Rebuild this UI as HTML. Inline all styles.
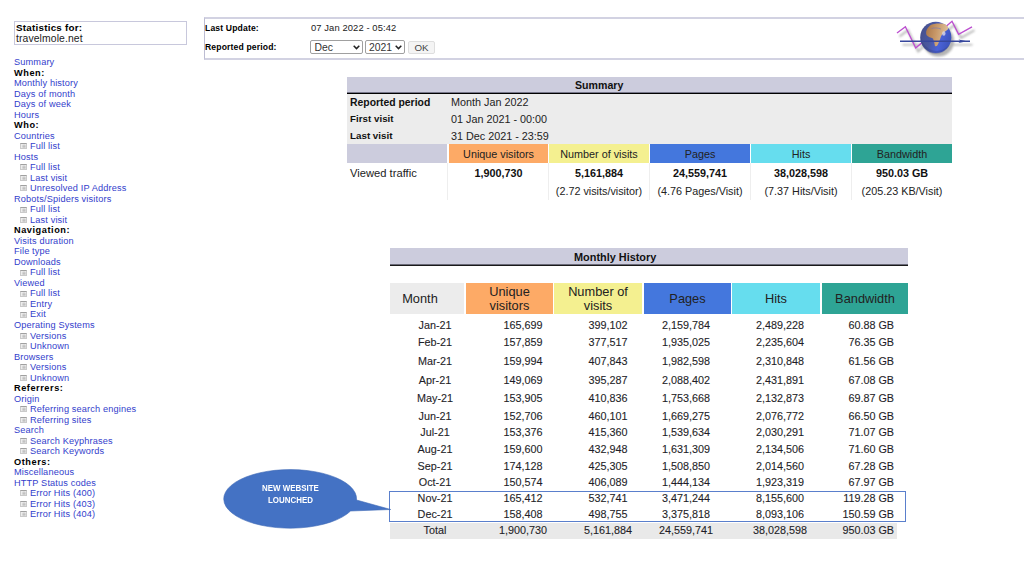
<!DOCTYPE html>
<html><head><meta charset="utf-8">
<style>
html,body{margin:0;padding:0;background:#fff;width:1024px;height:581px;overflow:hidden;position:relative;font-family:"Liberation Sans",sans-serif;color:#000}
.a{position:absolute;white-space:nowrap}
#stats{left:14px;top:21px;width:171px;height:22px;border:1px solid #c8c8dc}
#info{left:204px;top:17px;width:900px;height:39px;border:2px solid #d2d2e2;border-left:1px solid #bcbcd2}
#menu{left:14px;top:57.1px;font-size:9.2px;letter-spacing:0.15px;line-height:10.523px;color:#3340cc}
#menu div{height:10.523px}
#menu b{color:#000;letter-spacing:0.55px}
#menu .s{padding-left:16px;position:relative}
#menu .s:before{content:"";position:absolute;left:6px;top:2.2px;width:5px;height:4px;background:radial-gradient(circle at 60% 60%,#b8b8b8 0,#d4d4d4 1.5px,#ececec 2.5px);border:1px solid #cacaca;border-top-color:#a0a0a0}
.t{font-size:10.8px;color:#222}

.sel{border:1px solid #a0a0a0;border-radius:2px;background:#fff}
.sel span{position:absolute;top:1px;font-size:10.4px;color:#333;line-height:12px}
.sel i{position:absolute;right:5px;top:2.3px;width:3.2px;height:3.2px;border-right:1.5px solid #222;border-bottom:1.5px solid #222;transform:rotate(45deg)}
.btn{border:1px solid #dedede;border-radius:2px;background:#f4f4f4;font-size:9.8px;color:#444;text-align:center;line-height:12px}
.vl{top:163px;width:1px;height:37px;background:#eeeeee}
.t{font-size:10.8px;color:#222}
.tb{font-weight:bold;color:#111}
.tc{font-size:10.8px;color:#222;text-align:center}
.b{font-weight:bold;color:#111}
.mh{top:283px;height:31px;display:flex;align-items:center;justify-content:center;text-align:center;font-size:12.8px;line-height:14px;color:#222}
.cw{color:#fff;font-weight:bold;font-size:9px;transform:scaleX(0.88);transform-origin:0 0}
.r{position:absolute;font-size:10.8px;color:#1e1e28;white-space:nowrap;-webkit-text-stroke:0.1px #1e1e28}
</style></head><body>

<div class="a" id="stats"></div>
<div class="a" style="left:16px;top:22px;font-size:9.8px;font-weight:bold;letter-spacing:0.25px;color:#000">Statistics for:</div>
<div class="a" style="left:16px;top:33px;font-size:10.4px;letter-spacing:0.1px;color:#222">travelmole.net</div>

<div class="a" id="info"></div>
<div class="a" style="left:205px;top:23px;font-size:8.6px;font-weight:bold;letter-spacing:0.15px">Last Update:</div>
<div class="a" style="left:311px;top:22px;font-size:9.4px;letter-spacing:0.1px;color:#222">07 Jan 2022 - 05:42</div>
<div class="a" style="left:205px;top:42px;font-size:8.6px;font-weight:bold;letter-spacing:0.15px">Reported period:</div>

<div class="a" id="menu">
<div>Summary</div>
<div><b>When:</b></div>
<div>Monthly history</div>
<div>Days of month</div>
<div>Days of week</div>
<div>Hours</div>
<div><b>Who:</b></div>
<div>Countries</div>
<div class="s">Full list</div>
<div>Hosts</div>
<div class="s">Full list</div>
<div class="s">Last visit</div>
<div class="s">Unresolved IP Address</div>
<div>Robots/Spiders visitors</div>
<div class="s">Full list</div>
<div class="s">Last visit</div>
<div><b>Navigation:</b></div>
<div>Visits duration</div>
<div>File type</div>
<div>Downloads</div>
<div class="s">Full list</div>
<div>Viewed</div>
<div class="s">Full list</div>
<div class="s">Entry</div>
<div class="s">Exit</div>
<div>Operating Systems</div>
<div class="s">Versions</div>
<div class="s">Unknown</div>
<div>Browsers</div>
<div class="s">Versions</div>
<div class="s">Unknown</div>
<div><b>Referrers:</b></div>
<div>Origin</div>
<div class="s">Referring search engines</div>
<div class="s">Referring sites</div>
<div>Search</div>
<div class="s">Search Keyphrases</div>
<div class="s">Search Keywords</div>
<div><b>Others:</b></div>
<div>Miscellaneous</div>
<div>HTTP Status codes</div>
<div class="s">Error Hits (400)</div>
<div class="s">Error Hits (403)</div>
<div class="s">Error Hits (404)</div>
</div>


<!-- selects -->
<div class="a sel" style="left:310px;top:40px;width:51px;height:12px"><span style="left:3.5px">Dec</span><svg style="position:absolute;left:42px;top:4.3px" width="7" height="5" viewBox="0 0 7 5"><polyline points="0.7,0.8 3.5,3.6 6.3,0.8" fill="none" stroke="#222" stroke-width="1.5"/></svg></div>
<div class="a sel" style="left:365px;top:40px;width:38px;height:12px"><span style="left:3px">2021</span><svg style="position:absolute;left:29px;top:4.3px" width="7" height="5" viewBox="0 0 7 5"><polyline points="0.7,0.8 3.5,3.6 6.3,0.8" fill="none" stroke="#222" stroke-width="1.5"/></svg></div>
<div class="a btn" style="left:408px;top:41px;width:25px;height:11px">OK</div>

<!-- globe -->
<svg class="a" style="left:890px;top:14px" width="90" height="46" viewBox="890 14 90 46">
<defs>
<linearGradient id="gg" x1="0" y1="0" x2="1" y2="0.3">
<stop offset="0" stop-color="#464e88"/><stop offset="0.45" stop-color="#4a58a0"/><stop offset="0.75" stop-color="#4a62d8"/><stop offset="1" stop-color="#3f56c0"/>
</linearGradient>
<linearGradient id="land" x1="0" y1="0" x2="1" y2="0.2"><stop offset="0" stop-color="#a87448"/><stop offset="0.5" stop-color="#c89868"/><stop offset="1" stop-color="#dcc09a"/></linearGradient>
<filter id="bl" x="-30%" y="-30%" width="160%" height="160%"><feGaussianBlur stdDeviation="1.1"/></filter>
</defs>
<g opacity="0.4" filter="url(#bl)" transform="translate(2.5,3.5)">
<polyline points="897,33 905.4,26.7 915.7,48 921,43" fill="none" stroke="#444" stroke-width="1.8"/>
<polyline points="946,26.5 952,21.3 958.6,34.4 972,26.8" fill="none" stroke="#444" stroke-width="1.8"/>
<line x1="900" y1="41.2" x2="970" y2="41.2" stroke="#444" stroke-width="1.6"/>
<circle cx="936" cy="37.5" r="15.6" fill="#444"/>
</g>
<polyline points="897,33 905.4,26.7 915.7,48 922,42.6" fill="none" stroke="#bc4fd0" stroke-width="1.4" stroke-linejoin="miter"/>
<polyline points="946,26.5 952,21.3 958.6,34.4 972,26.8" fill="none" stroke="#bc4fd0" stroke-width="1.4"/>
<circle cx="935.8" cy="37.4" r="15.6" fill="url(#gg)"/>
<path d="M930,25.5 C933,23.5 940,23 944.5,24 C947,25 948.5,27 948.3,29 L946.5,30.5 C944,32 942,34 941,36.5 C940,39.5 938.8,43 937,46 L935,46.2 C934.5,43.5 934,41 933,38.5 C931,37.5 928,37 926.5,35 C925.6,32.5 926.3,30 927.8,28 Z" fill="url(#land)"/>
<path d="M931.5,28.5 C934,27.6 938,27.8 941,29" fill="none" stroke="#6a70c0" stroke-width="0.9" opacity="0.6"/>

<ellipse cx="943.8" cy="33.5" rx="1.7" ry="2.3" fill="#dcdae6" opacity="0.8"/>
<path d="M921,37 A15,15 0 0 0 950,44 A16,16 0 0 1 921,37 Z" fill="#2c3570" opacity="0.25"/>
<line x1="900" y1="41.2" x2="970" y2="41.2" stroke="#36469c" stroke-width="1.4"/>
<path d="M958.5,39.4 L967,41.2 L958.5,43 L960.5,41.2 Z" fill="#36469c"/>
</svg>

<!-- Summary table -->
<div class="a" style="left:347px;top:77px;width:605px;height:15px;background:#ccccdd"></div>
<div class="a" style="left:347px;top:92px;width:605px;height:1px;background:#77778a"></div><div class="a" style="left:347px;top:93px;width:605px;height:1px;background:#000"></div>
<div class="a" style="left:347px;top:94px;width:605px;height:50px;background:#ececec"></div>
<div class="a" style="left:347px;top:144px;width:100px;height:19px;background:#ccccdd"></div>
<div class="a" style="left:449px;top:144px;width:99px;height:19px;background:#fdaa66"></div>
<div class="a" style="left:549px;top:144px;width:100px;height:19px;background:#f4f090"></div>
<div class="a" style="left:650px;top:144px;width:100px;height:19px;background:#4477dd"></div>
<div class="a" style="left:751px;top:144px;width:100px;height:19px;background:#66ddee"></div>
<div class="a" style="left:852px;top:144px;width:100px;height:19px;background:#2ea495"></div>
<div class="a vl" style="left:447px"></div>
<div class="a vl" style="left:548px"></div>
<div class="a vl" style="left:649px"></div>
<div class="a vl" style="left:750px"></div>
<div class="a vl" style="left:851px"></div>

<div class="a tb" style="left:575px;top:79px;font-size:10.6px">Summary</div>
<div class="a tb" style="left:350px;top:97px;font-size:10.4px">Reported period</div>
<div class="a tb" style="left:350px;top:113px;font-size:9.7px;letter-spacing:0.05px">First visit</div>
<div class="a tb" style="left:350px;top:130px;font-size:9.8px">Last visit</div>
<div class="a t" style="left:451px;top:96px">Month Jan 2022</div>
<div class="a t" style="left:451px;top:113px">01 Jan 2021 - 00:00</div>
<div class="a t" style="left:451px;top:130px">31 Dec 2021 - 23:59</div>

<div class="a tc" style="left:449px;width:99px;top:148px">Unique visitors</div>
<div class="a tc" style="left:549px;width:100px;top:148px">Number of visits</div>
<div class="a tc" style="left:650px;width:100px;top:148px">Pages</div>
<div class="a tc" style="left:751px;width:100px;top:148px">Hits</div>
<div class="a tc" style="left:852px;width:100px;top:148px">Bandwidth</div>

<div class="a t" style="left:350px;top:167px;font-size:11.2px">Viewed traffic</div>
<div class="a tc b" style="left:449px;width:99px;top:167px">1,900,730</div>
<div class="a tc b" style="left:549px;width:100px;top:167px">5,161,884</div>
<div class="a tc b" style="left:650px;width:100px;top:167px">24,559,741</div>
<div class="a tc b" style="left:751px;width:100px;top:167px">38,028,598</div>
<div class="a tc b" style="left:852px;width:100px;top:167px">950.03 GB</div>
<div class="a tc" style="left:549px;width:100px;top:185px">(2.72 visits/visitor)</div>
<div class="a tc" style="left:650px;width:100px;top:185px">(4.76 Pages/Visit)</div>
<div class="a tc" style="left:751px;width:100px;top:185px">(7.37 Hits/Visit)</div>
<div class="a tc" style="left:852px;width:100px;top:185px">(205.23 KB/Visit)</div>

<!-- Monthly history -->
<div class="a" style="left:390px;top:248px;width:518px;height:16px;background:#ccccdd"></div>
<div class="a" style="left:390px;top:264px;width:518px;height:1px;background:#6a6a78"></div><div class="a" style="left:390px;top:265px;width:518px;height:1px;background:#1a1a1a"></div>
<div class="a tb" style="left:574px;top:251px;font-size:10.9px">Monthly History</div>

<div class="a mh" style="left:390px;width:74px;background:#ececec"><div style="padding-right:14px">Month</div></div>
<div class="a mh" style="left:466px;width:87px;background:#fdaa66"><div>Unique<br>visitors</div></div>
<div class="a mh" style="left:554px;width:88px;background:#f4f090"><div>Number of<br>visits</div></div>
<div class="a mh" style="left:644px;width:87px;background:#4477dd"><div>Pages</div></div>
<div class="a mh" style="left:732px;width:88px;background:#66ddee"><div>Hits</div></div>
<div class="a mh" style="left:822px;width:86px;background:#2ea495"><div>Bandwidth</div></div>

<div class="a" style="left:390px;top:523px;width:507px;height:16px;background:#e9e9e9"></div>
<div class="a" style="left:389px;top:491px;width:515px;height:29px;border:1px solid #5a7fcc"></div>

<div id="rows">
<div class="r" style="left:385px;width:100px;text-align:center;top:319px">Jan-21</div>
<div class="r" style="left:473px;width:100px;text-align:center;top:319px">165,699</div>
<div class="r" style="left:558px;width:100px;text-align:center;top:319px">399,102</div>
<div class="r" style="left:636px;width:100px;text-align:center;top:319px">2,159,784</div>
<div class="r" style="left:730px;width:100px;text-align:center;top:319px">2,489,228</div>
<div class="r" style="left:794px;width:100px;text-align:right;top:319px">60.88 GB</div>
<div class="r" style="left:385px;width:100px;text-align:center;top:336px">Feb-21</div>
<div class="r" style="left:473px;width:100px;text-align:center;top:336px">157,859</div>
<div class="r" style="left:558px;width:100px;text-align:center;top:336px">377,517</div>
<div class="r" style="left:636px;width:100px;text-align:center;top:336px">1,935,025</div>
<div class="r" style="left:730px;width:100px;text-align:center;top:336px">2,235,604</div>
<div class="r" style="left:794px;width:100px;text-align:right;top:336px">76.35 GB</div>
<div class="r" style="left:385px;width:100px;text-align:center;top:355px">Mar-21</div>
<div class="r" style="left:473px;width:100px;text-align:center;top:355px">159,994</div>
<div class="r" style="left:558px;width:100px;text-align:center;top:355px">407,843</div>
<div class="r" style="left:636px;width:100px;text-align:center;top:355px">1,982,598</div>
<div class="r" style="left:730px;width:100px;text-align:center;top:355px">2,310,848</div>
<div class="r" style="left:794px;width:100px;text-align:right;top:355px">61.56 GB</div>
<div class="r" style="left:385px;width:100px;text-align:center;top:374px">Apr-21</div>
<div class="r" style="left:473px;width:100px;text-align:center;top:374px">149,069</div>
<div class="r" style="left:558px;width:100px;text-align:center;top:374px">395,287</div>
<div class="r" style="left:636px;width:100px;text-align:center;top:374px">2,088,402</div>
<div class="r" style="left:730px;width:100px;text-align:center;top:374px">2,431,891</div>
<div class="r" style="left:794px;width:100px;text-align:right;top:374px">67.08 GB</div>
<div class="r" style="left:385px;width:100px;text-align:center;top:392px">May-21</div>
<div class="r" style="left:473px;width:100px;text-align:center;top:392px">153,905</div>
<div class="r" style="left:558px;width:100px;text-align:center;top:392px">410,836</div>
<div class="r" style="left:636px;width:100px;text-align:center;top:392px">1,753,668</div>
<div class="r" style="left:730px;width:100px;text-align:center;top:392px">2,132,873</div>
<div class="r" style="left:794px;width:100px;text-align:right;top:392px">69.87 GB</div>
<div class="r" style="left:385px;width:100px;text-align:center;top:410px">Jun-21</div>
<div class="r" style="left:473px;width:100px;text-align:center;top:410px">152,706</div>
<div class="r" style="left:558px;width:100px;text-align:center;top:410px">460,101</div>
<div class="r" style="left:636px;width:100px;text-align:center;top:410px">1,669,275</div>
<div class="r" style="left:730px;width:100px;text-align:center;top:410px">2,076,772</div>
<div class="r" style="left:794px;width:100px;text-align:right;top:410px">66.50 GB</div>
<div class="r" style="left:385px;width:100px;text-align:center;top:426px">Jul-21</div>
<div class="r" style="left:473px;width:100px;text-align:center;top:426px">153,376</div>
<div class="r" style="left:558px;width:100px;text-align:center;top:426px">415,360</div>
<div class="r" style="left:636px;width:100px;text-align:center;top:426px">1,539,634</div>
<div class="r" style="left:730px;width:100px;text-align:center;top:426px">2,030,291</div>
<div class="r" style="left:794px;width:100px;text-align:right;top:426px">71.07 GB</div>
<div class="r" style="left:385px;width:100px;text-align:center;top:443px">Aug-21</div>
<div class="r" style="left:473px;width:100px;text-align:center;top:443px">159,600</div>
<div class="r" style="left:558px;width:100px;text-align:center;top:443px">432,948</div>
<div class="r" style="left:636px;width:100px;text-align:center;top:443px">1,631,309</div>
<div class="r" style="left:730px;width:100px;text-align:center;top:443px">2,134,506</div>
<div class="r" style="left:794px;width:100px;text-align:right;top:443px">71.60 GB</div>
<div class="r" style="left:385px;width:100px;text-align:center;top:460px">Sep-21</div>
<div class="r" style="left:473px;width:100px;text-align:center;top:460px">174,128</div>
<div class="r" style="left:558px;width:100px;text-align:center;top:460px">425,305</div>
<div class="r" style="left:636px;width:100px;text-align:center;top:460px">1,508,850</div>
<div class="r" style="left:730px;width:100px;text-align:center;top:460px">2,014,560</div>
<div class="r" style="left:794px;width:100px;text-align:right;top:460px">67.28 GB</div>
<div class="r" style="left:385px;width:100px;text-align:center;top:476px">Oct-21</div>
<div class="r" style="left:473px;width:100px;text-align:center;top:476px">150,574</div>
<div class="r" style="left:558px;width:100px;text-align:center;top:476px">406,089</div>
<div class="r" style="left:636px;width:100px;text-align:center;top:476px">1,444,134</div>
<div class="r" style="left:730px;width:100px;text-align:center;top:476px">1,923,319</div>
<div class="r" style="left:794px;width:100px;text-align:right;top:476px">67.97 GB</div>
<div class="r" style="left:385px;width:100px;text-align:center;top:492px">Nov-21</div>
<div class="r" style="left:473px;width:100px;text-align:center;top:492px">165,412</div>
<div class="r" style="left:558px;width:100px;text-align:center;top:492px">532,741</div>
<div class="r" style="left:636px;width:100px;text-align:center;top:492px">3,471,244</div>
<div class="r" style="left:730px;width:100px;text-align:center;top:492px">8,155,600</div>
<div class="r" style="left:794px;width:100px;text-align:right;top:492px">119.28 GB</div>
<div class="r" style="left:385px;width:100px;text-align:center;top:508px">Dec-21</div>
<div class="r" style="left:473px;width:100px;text-align:center;top:508px">158,408</div>
<div class="r" style="left:558px;width:100px;text-align:center;top:508px">498,755</div>
<div class="r" style="left:636px;width:100px;text-align:center;top:508px">3,375,818</div>
<div class="r" style="left:730px;width:100px;text-align:center;top:508px">8,093,106</div>
<div class="r" style="left:794px;width:100px;text-align:right;top:508px">150.59 GB</div>
<div class="r" style="left:385px;width:100px;text-align:center;top:524px">Total</div>
<div class="r" style="left:473px;width:100px;text-align:center;top:524px">1,900,730</div>
<div class="r" style="left:558px;width:100px;text-align:center;top:524px">5,161,884</div>
<div class="r" style="left:636px;width:100px;text-align:center;top:524px">24,559,741</div>
<div class="r" style="left:730px;width:100px;text-align:center;top:524px">38,028,598</div>
<div class="r" style="left:794px;width:100px;text-align:right;top:524px">950.03 GB</div>
</div>

<!-- callout -->
<svg class="a" style="left:215px;top:462px" width="180" height="72" viewBox="215 462 180 72">
<path d="M356.5,500 L390.7,509.5 L350.6,511 A66.4,29.3 0 1 1 356.5,500 Z" fill="#4472c4" stroke="#3f69b5" stroke-width="0.6"/>
</svg>
<div class="a cw" style="left:262px;top:483px">NEW WEBSITE</div>
<div class="a cw" style="left:268px;top:495px">LOUNCHED</div>
</body></html>
